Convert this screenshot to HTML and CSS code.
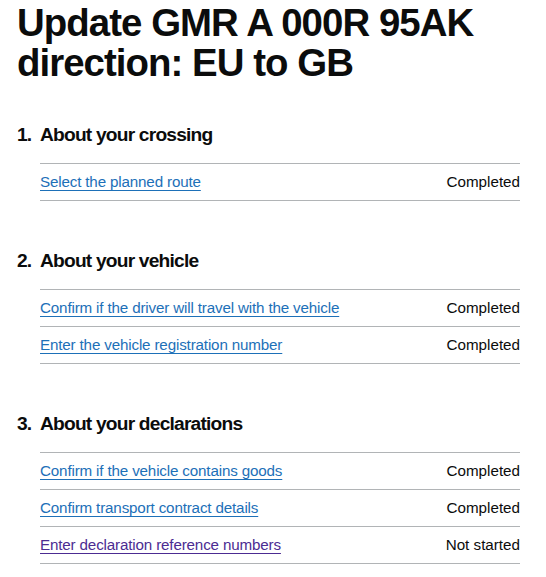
FILE: index.html
```html
<!DOCTYPE html>
<html lang="en">
<head>
<meta charset="utf-8">
<title>Update GMR</title>
<link rel="stylesheet" href="styles.css">
</head>
<body>
<main class="page">
  <h1 class="title">Update GMR A 000R 95AK direction: EU to GB</h1>
  <ol class="task-list">
    <li class="section">
      <h2 class="section-heading"><span class="section-number">1.</span>About your crossing</h2>
      <ul class="items">
        <li class="item"><a class="task-link" href="#">Select the planned route</a><span class="status">Completed</span></li>
      </ul>
    </li>
    <li class="section">
      <h2 class="section-heading"><span class="section-number">2.</span>About your vehicle</h2>
      <ul class="items">
        <li class="item"><a class="task-link" href="#">Confirm if the driver will travel with the vehicle</a><span class="status">Completed</span></li>
        <li class="item"><a class="task-link" href="#">Enter the vehicle registration number</a><span class="status">Completed</span></li>
      </ul>
    </li>
    <li class="section">
      <h2 class="section-heading"><span class="section-number">3.</span>About your declarations</h2>
      <ul class="items">
        <li class="item"><a class="task-link" href="#">Confirm if the vehicle contains goods</a><span class="status">Completed</span></li>
        <li class="item"><a class="task-link" href="#">Confirm transport contract details</a><span class="status">Completed</span></li>
        <li class="item"><a class="task-link task-link--visited" href="#">Enter declaration reference numbers</a><span class="status">Not started</span></li>
      </ul>
    </li>
  </ol>
</main>
</body>
</html>
```
FILE: styles.css
```css
html, body {
  margin: 0;
  padding: 0;
  background: #ffffff;
}

body {
  font-family: "Liberation Sans", Arial, sans-serif;
  color: #0b0c0c;
}

.page {
  padding: 3px 26px 0 17px;
}

.title {
  margin: 0 0 40px;
  font-size: 38.4px;
  line-height: 40px;
  font-weight: 700;
  letter-spacing: -0.95px;
}

.task-list {
  list-style: none;
  margin: 0;
  padding: 0;
}

.section {
  margin: 0 0 48px;
}

.section:last-child {
  margin-bottom: 0;
}

.section-heading {
  display: flex;
  margin: 0 0 16px;
  font-size: 19.2px;
  line-height: 24px;
  font-weight: 700;
  letter-spacing: -0.8px;
}

.section-number {
  display: inline-block;
  width: 23px;
  flex: none;
}

.items {
  list-style: none;
  margin: 0 0 0 23px;
  padding: 0;
  border-top: 1px solid #b1b4b6;
}

.item {
  display: flex;
  justify-content: space-between;
  align-items: baseline;
  padding: 8px 0;
  border-bottom: 1px solid #b1b4b6;
  font-size: 15.2px;
  line-height: 20px;
}

.task-link {
  color: #1d70b8;
  letter-spacing: -0.16px;
  text-decoration: underline;
  text-decoration-thickness: 1px;
  text-underline-offset: 2.5px;
}

.task-link--visited {
  color: #4c2c92;
}

.status {
  color: #0b0c0c;
  text-align: right;
}
```
